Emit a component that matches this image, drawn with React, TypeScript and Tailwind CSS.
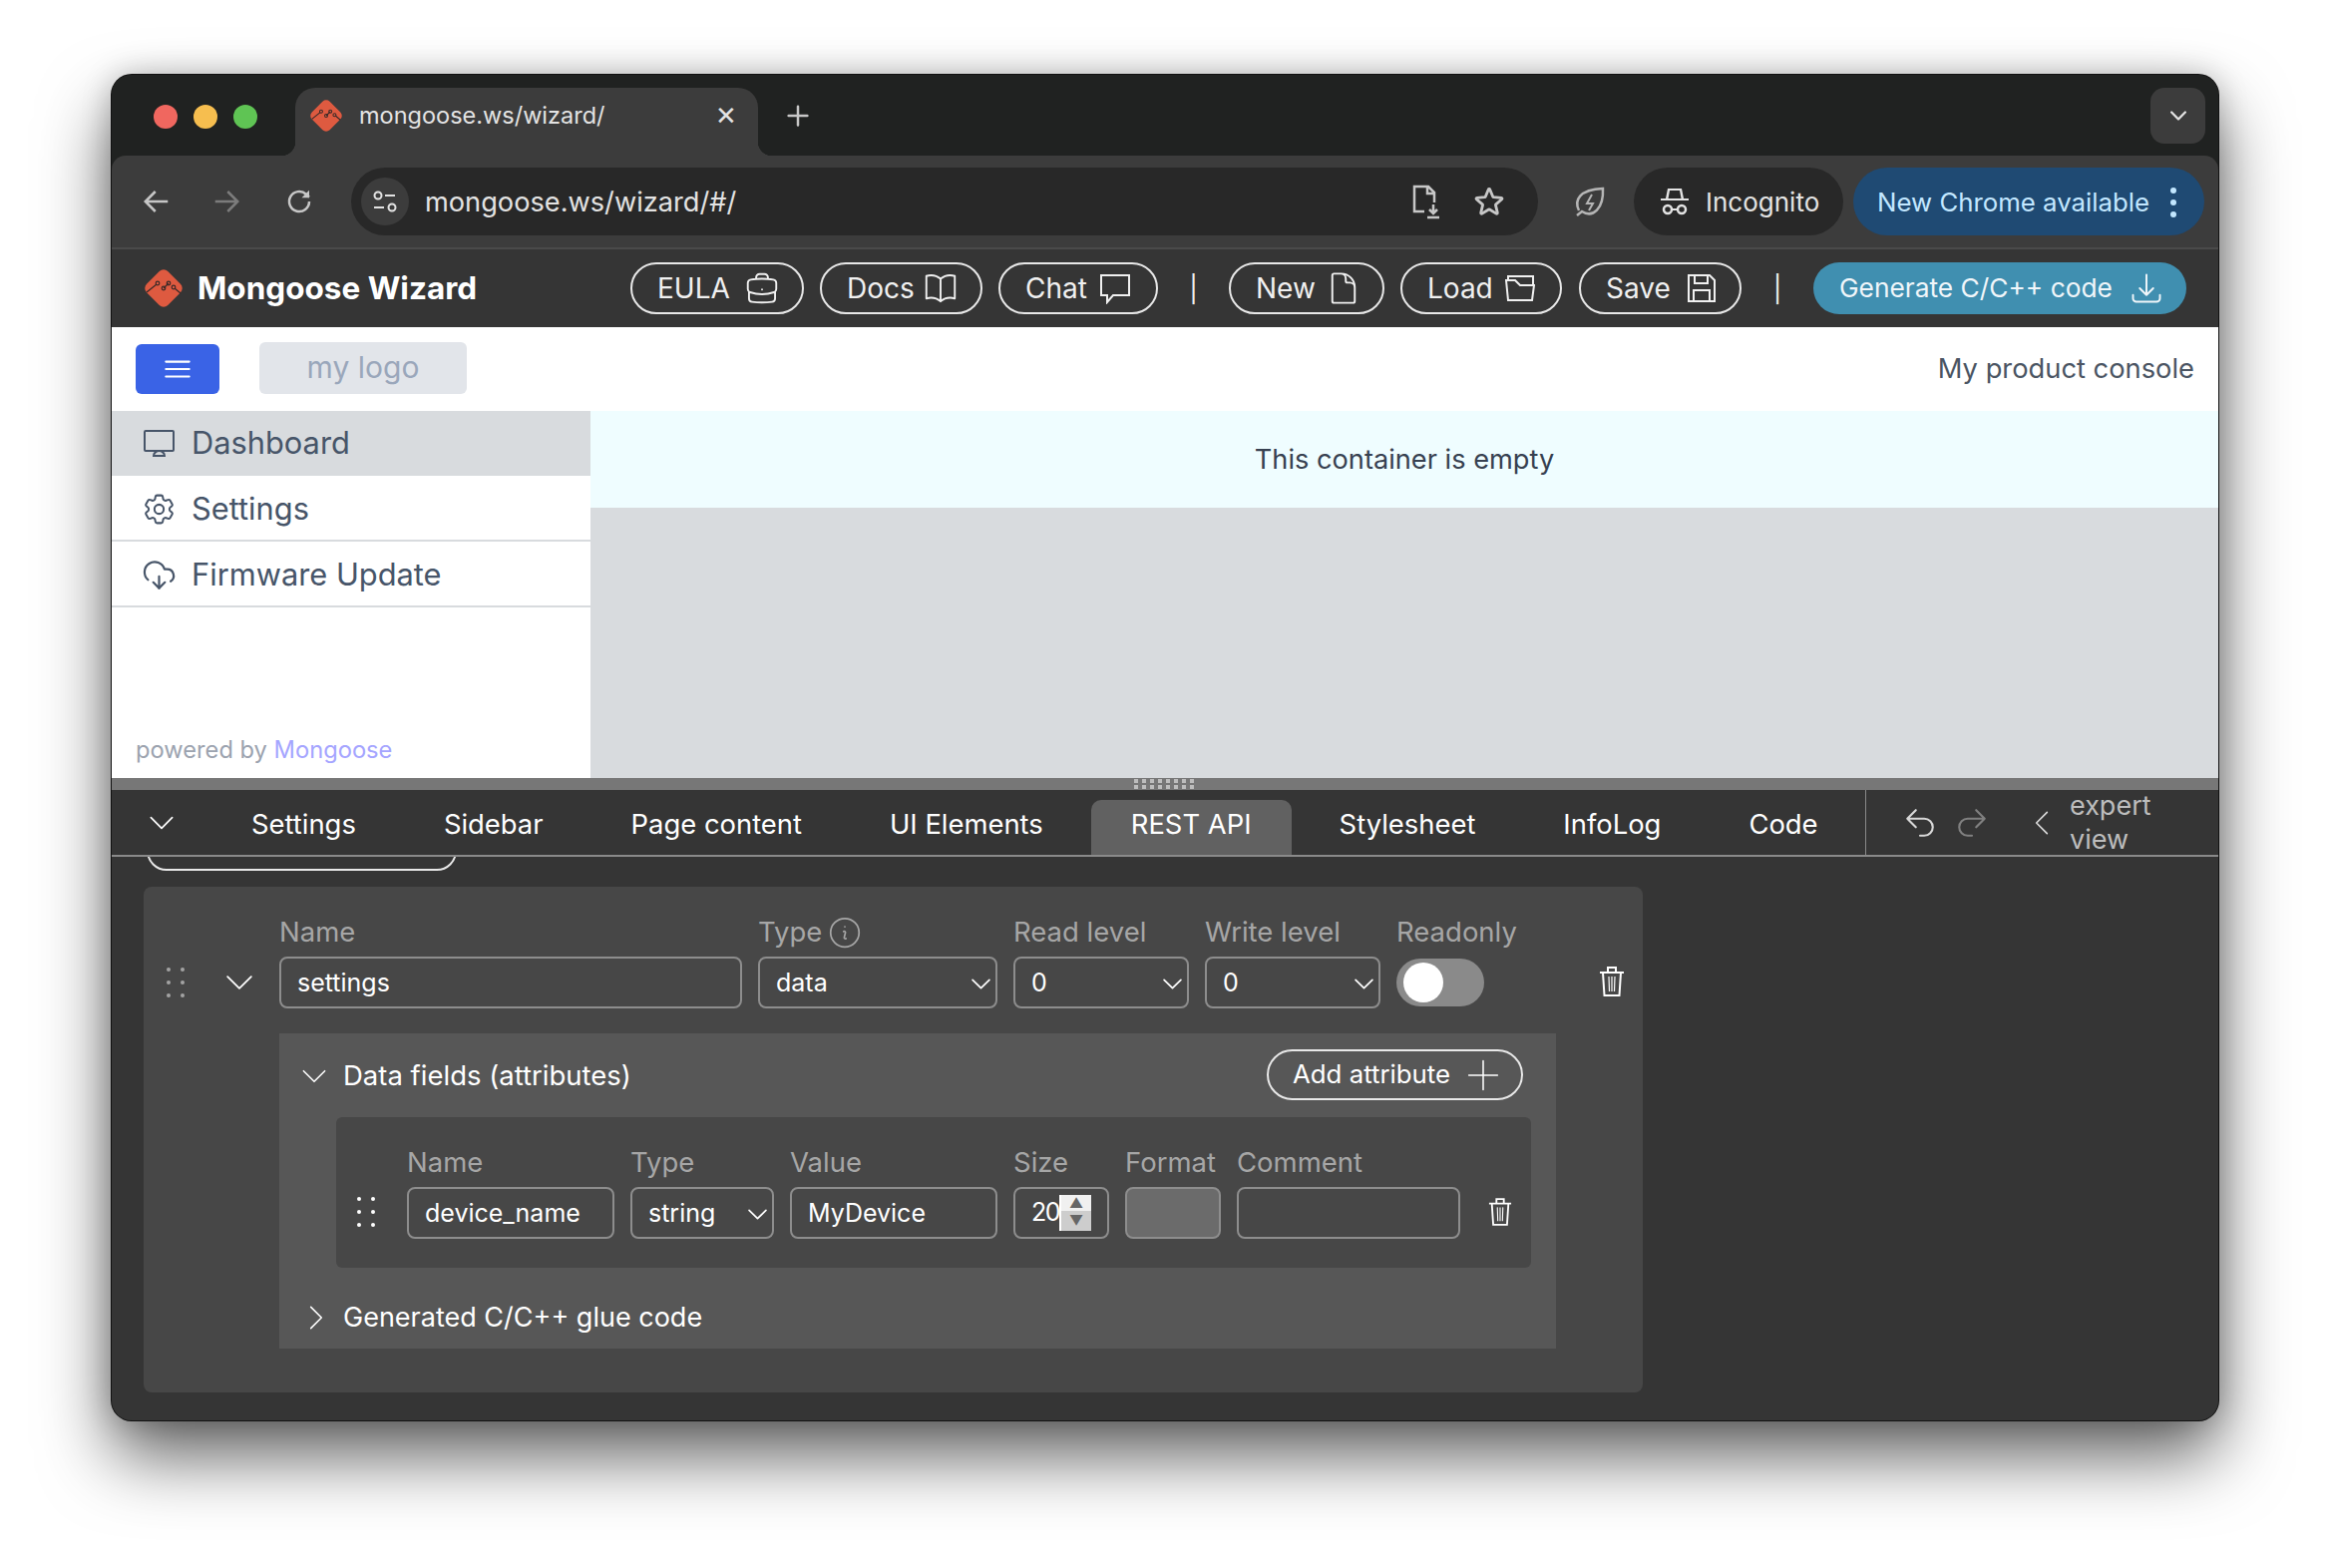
import type { ReactNode } from "react";
import { CloudDownload } from "lucide-react";
import {
  HiOutlineArrowDownTray,
  HiOutlineArrowUturnLeft,
  HiOutlineArrowUturnRight,
  HiOutlineBars3,
  HiOutlineBookOpen,
  HiOutlineBriefcase,
  HiOutlineChevronDown,
  HiOutlineChevronLeft,
  HiOutlineChevronRight,
  HiOutlineCog6Tooth,
  HiOutlineDocument,
  HiOutlineInformationCircle,
  HiOutlinePlus,
  HiOutlineStar,
} from "react-icons/hi2";

const MongooseLogo = ({ size }: { size: number }) => (
  <svg width={size} height={size} viewBox="0 0 38 38" className="shrink-0">
    <rect x="4" y="4" width="30" height="30" rx="6" transform="rotate(45 19 19)" fill="#de5a40" />
    <path d="M2 23 L12 15 M19 19 L24 14 M30 19 L36 24" stroke="#3a2a28" strokeWidth="1.300" fill="none" />
    <circle cx="13" cy="14" r="1.800" fill="none" stroke="#3a2a28" strokeWidth="1.200" />
    <circle cx="19" cy="19" r="1.800" fill="none" stroke="#3a2a28" strokeWidth="1.200" />
    <circle cx="24" cy="14" r="1.800" fill="none" stroke="#3a2a28" strokeWidth="1.200" />
    <circle cx="29" cy="18" r="1.800" fill="none" stroke="#3a2a28" strokeWidth="1.200" />
  </svg>
);

const SaveIcon = () => (
  <svg width="28" height="28" viewBox="0 0 28 28" fill="none" stroke="currentColor" strokeWidth="2" className="shrink-0 mr-[3px]">
    <path d="M1 1h21l5 5v21H1z" />
    <path d="M7 1v8h13V1M6 27V16h16v11" />
  </svg>
);

const ChatIcon = () => (
  <svg width="32" height="32" viewBox="0 0 32 32" fill="none" stroke="currentColor" strokeWidth="2" className="shrink-0 mr-[4px]">
    <path d="M2 3h28v20H14l-6 7v-7H2z" />
  </svg>
);

const FolderIcon = () => (
  <svg width="30" height="26" viewBox="0 0 30 26" fill="none" stroke="currentColor" strokeWidth="2" className="shrink-0 mr-[4px]">
    <path d="M3 5V1h25v9" />
    <path d="M1 5h9l5 5h14l-2 15H3z" />
  </svg>
);

const MonitorIcon = () => (
  <svg width="37" height="37" viewBox="0 0 37 37" fill="none" stroke="currentColor" strokeWidth="2" className="shrink-0">
    <rect x="4" y="6" width="29" height="20" rx="1" />
    <path d="M13 31c0-3 3-5 5.500-5s5.500 2 5.500 5z" />
  </svg>
);

const TrashIcon = ({ className }: { className: string }) => (
  <svg viewBox="0 0 26 30" fill="none" stroke="currentColor" strokeWidth="2" className={className}>
    <path d="M1 6h24M9 5V1h8v4M4 6l1.500 23h15L22 6" />
    <path d="M10 10l.5 15M13 10v15M16 10l-.5 15" strokeWidth="1.200" />
  </svg>
);

const DragDots = ({ dim }: { dim?: boolean }) => (
  <div className={`grid grid-cols-2 gap-x-[10px] gap-y-[9px] w-fit ${dim ? "opacity-50" : ""}`}>
    {[0, 1, 2, 3, 4, 5].map((i) => (
      <span key={i} className="w-[4px] h-[4px] rounded-full bg-white" />
    ))}
  </div>
);

const HeaderButton = ({ label, children }: { label: string; children: ReactNode }) => (
  <button className="w-full h-[52px] pl-[25px] pr-[21px] flex items-center justify-between rounded-full border-2 border-[#e8e8e8] text-[#f0f0f0] text-[28px] whitespace-nowrap">
    <span>{label}</span>
    {children}
  </button>
);

const Field = ({ label, width, children }: { label: ReactNode; width: string; children: ReactNode }) => (
  <div className={`flex flex-col ${width}`}>
    <div className="h-[40px] pb-[8px] flex items-center gap-[4px] text-[27.5px] text-[#a6a6a6] whitespace-nowrap">{label}</div>
    {children}
  </div>
);

const Input = ({ value }: { value: string }) => (
  <div className="h-[52px] pt-[2px] flex items-center px-[16px] rounded-[8px] border-2 border-[#8d8d8d] text-[25px] text-white whitespace-nowrap">
    {value}
  </div>
);

const Select = ({ value }: { value: string }) => (
  <div className="h-[52px] pt-[2px] flex items-center justify-between pl-[16px] pr-[1px] rounded-[8px] border-2 border-[#8d8d8d] text-[25px] text-white">
    <span>{value}</span>
    <HiOutlineChevronDown size={27} strokeWidth={1.500} />
  </div>
);

const SideItem = ({ label, active, icon }: { label: string; active?: boolean; icon: ReactNode }) => (
  <div
    className={`flex items-center gap-[14px] pl-[29px] text-[#475569] text-[30.800px] ${
      active ? "h-[65px] bg-[#d8dbde]" : "h-[66px] pt-[2px] border-b-2 border-[#d8dbde]"
    }`}
  >
    {icon}
    <span>{label}</span>
  </div>
);

const bottomTabs = ["Settings", "Sidebar", "Page content", "UI Elements", "REST API", "Stylesheet", "InfoLog", "Code"];

export default function App() {
  return (
    <div className="h-[1572px] overflow-hidden bg-white pt-[75px] pl-[112px] font-['Inter',sans-serif]">
      <div className="w-[2112px] h-[1349px] flex flex-col overflow-hidden rounded-[20px] bg-[#202221] shadow-[0_0_0_1px_#111,0_36px_70px_rgba(0,0,0,0.62),0_0_30px_rgba(0,0,0,0.22)]">
        {/* tab strip */}
        <div className="h-[81px] shrink-0 bg-[#202221] flex items-end pr-[13px]">
          <div className="w-[184px] h-[68px] flex items-center gap-[16px] pl-[42px] pb-[10px]">
            <span className="w-[24px] h-[24px] rounded-full bg-[#f0675f]" />
            <span className="w-[24px] h-[24px] rounded-full bg-[#f6be4f]" />
            <span className="w-[24px] h-[24px] rounded-full bg-[#5fc454]" />
          </div>
          <div className="relative w-[464px] h-[68px] bg-[#3c3c3c] rounded-t-[20px] flex items-center pl-[15px] pr-[21px] pb-[12px] text-[#e3e3e3] text-[23.500px]">
            <span className="absolute -left-[14px] bottom-0 w-[14px] h-[14px] bg-[radial-gradient(circle_at_0_0,#202221_14px,#3c3c3c_14.500px)]" />
            <span className="absolute -right-[14px] bottom-0 w-[14px] h-[14px] bg-[radial-gradient(circle_at_100%_0,#202221_14px,#3c3c3c_14.500px)]" />
            <MongooseLogo size={32} />
            <span className="ml-[17px] whitespace-nowrap">mongoose.ws/wizard/</span>
            <span className="ml-auto text-[#e3e3e3] text-[26px] leading-none">✕</span>
          </div>
          <div className="ml-[25px] h-[68px] pb-[12px] flex items-center text-[#c7c7c7]">
            <HiOutlinePlus size={30} strokeWidth={2} />
          </div>
          <div className="ml-auto mb-[12px] w-[55px] h-[56px] rounded-[14px] bg-[#3c3c3c] flex items-center justify-center text-[#e3e3e3]">
            <HiOutlineChevronDown size={22} strokeWidth={2.500} />
          </div>
        </div>

        {/* browser toolbar */}
        <div className="h-[94px] shrink-0 bg-[#3c3c3c] rounded-t-[14px] border-b-2 border-[#4a4a4a] flex items-center pl-[30px] pr-[14px]">
          <BackArrow />
          <div className="w-[40px]" />
          <ForwardArrow />
          <div className="w-[43px]" />
          <svg width="30" height="30" viewBox="0 0 24 24" fill="none" stroke="#c7c7c7" strokeWidth="2" className="shrink-0">
            <path d="M20 12a8 8 0 1 1-2.500-5.800L20 8.500" />
            <path d="M20 3v6h-6" fill="#c7c7c7" stroke="none" />
          </svg>
          <div className="ml-[37px] w-[1190px] h-[68px] rounded-full bg-[#282828] flex items-center pl-[10px] pr-[32px]">
            <div className="w-[48px] h-[48px] rounded-full bg-[#3c3c3c] flex items-center justify-center">
              <svg width="26" height="26" viewBox="0 0 26 26" fill="none" stroke="#e3e3e3" strokeWidth="2">
                <circle cx="6" cy="7" r="3.500" />
                <path d="M13 7h10M2 19h10" />
                <circle cx="20" cy="19" r="3.500" />
              </svg>
            </div>
            <span className="ml-[16px] pt-[2px] text-[27.200px] text-[#e3e3e3] whitespace-nowrap">mongoose.ws/wizard/#/</span>
            <svg width="32" height="36" viewBox="0 0 32 36" fill="none" stroke="#c7c7c7" strokeWidth="2.500" className="ml-auto">
              <path d="M14 28H4V3h14l6 6v10M17 3v7h7" />
              <path d="M23 21v9M19 26l4 4 4-4" />
              <path d="M17 34h12" />
            </svg>
            <HiOutlineStar size={34} color="#c7c7c7" strokeWidth={2} className="ml-[30px]" />
          </div>
          <svg width="34" height="34" viewBox="0 0 34 34" fill="none" stroke="#b5b5b5" strokeWidth="2.500" className="ml-[35px] shrink-0">
            <path d="M6 26C1 16 6 5 30 4c1 20-10 30-21 23L4 31" />
            <path d="M19 10l-5 9h6l-4 7" strokeWidth="2" />
          </svg>
          <div className="ml-[27px] w-[210px] h-[68px] rounded-full bg-[#282828] flex items-center pl-[26px] gap-[16px] text-[#e3e3e3] text-[26px]">
            <svg width="30" height="30" viewBox="0 0 30 30" fill="#e3e3e3" className="shrink-0">
              <path d="M8 2h14l2 10h5v2H1v-2h5zM10 4l-1.500 8h13L20 4z" />
              <circle cx="8" cy="23" r="4" fill="none" stroke="#e3e3e3" strokeWidth="2.500" />
              <circle cx="22" cy="23" r="4" fill="none" stroke="#e3e3e3" strokeWidth="2.500" />
              <path d="M12 22h6v2h-6z" />
            </svg>
            <span>Incognito</span>
          </div>
          <div className="ml-[10px] flex-1 h-[68px] pt-[2px] rounded-full bg-[#1f4a73] flex items-center pl-[24px] pr-[28px] justify-between text-[#c2e7ff] text-[25.800px] whitespace-nowrap">
            <span>New Chrome available</span>
            <span className="flex flex-col gap-[6px]">
              <span className="w-[6px] h-[6px] rounded-full bg-[#c2e7ff]" />
              <span className="w-[6px] h-[6px] rounded-full bg-[#c2e7ff]" />
              <span className="w-[6px] h-[6px] rounded-full bg-[#c2e7ff]" />
            </span>
          </div>
        </div>

        {/* wizard header */}
        <div className="h-[78px] shrink-0 bg-[#353535] flex items-center pl-[33px]">
          <MongooseLogo size={38} />
          <span className="ml-[15px] w-[434px] text-[31.500px] font-bold text-white whitespace-nowrap">Mongoose Wizard</span>
          <div className="flex items-center">
            <div className="w-[174px]"><HeaderButton label="EULA"><HiOutlineBriefcase size={38} strokeWidth={1.200} /></HeaderButton></div>
            <div className="w-[163px] ml-[16px]"><HeaderButton label="Docs"><HiOutlineBookOpen size={38} strokeWidth={1.200} /></HeaderButton></div>
            <div className="w-[160px] ml-[16px]"><HeaderButton label="Chat"><ChatIcon /></HeaderButton></div>
            <span className="w-[71px] text-center text-[#f0f0f0] text-[26px]">|</span>
            <div className="w-[156px]"><HeaderButton label="New"><HiOutlineDocument size={36} strokeWidth={1.300} /></HeaderButton></div>
            <div className="w-[162px] ml-[16px]"><HeaderButton label="Load"><FolderIcon /></HeaderButton></div>
            <div className="w-[163px] ml-[17px]"><HeaderButton label="Save"><SaveIcon /></HeaderButton></div>
            <span className="w-[72px] text-center text-[#f0f0f0] text-[26px]">|</span>
            <button className="w-[374px] h-[52px] rounded-full bg-[#408fb0] flex items-center justify-between pl-[26px] pr-[22px] text-[#f0f6fa] text-[26.300px] whitespace-nowrap">
              <span>Generate C/C++ code</span>
              <HiOutlineArrowDownTray size={36} strokeWidth={1.300} />
            </button>
          </div>
        </div>

        {/* preview */}
        <div className="h-[84px] shrink-0 bg-white flex items-center pl-[24px] pr-[24px]">
          <button className="w-[84px] h-[50px] rounded-[6px] bg-[#3a63e6] flex items-center justify-center text-white">
            <HiOutlineBars3 size={34} />
          </button>
          <div className="ml-[40px] w-[208px] h-[52px] -mt-[2px] pb-[2px] rounded-[6px] bg-[#e2e5ea] text-[#9aa7bb] text-[30px] flex items-center justify-center">
            my logo
          </div>
          <span className="ml-auto pt-[1px] text-[27.300px] text-[#4b5563]">My product console</span>
        </div>
        <div className="h-[368px] shrink-0 flex">
          <div className="w-[480px] bg-white flex flex-col">
            <SideItem label="Dashboard" active icon={<MonitorIcon />} />
            <SideItem label="Settings" icon={<HiOutlineCog6Tooth size={37} strokeWidth={1.300} />} />
            <SideItem label="Firmware Update" icon={<span className="w-[37px] flex justify-center"><CloudDownload size={35} strokeWidth={1.500} /></span>} />
            <div className="mt-auto pl-[24px] pb-[10px] text-[23.700px] text-[#9ca3af]">
              powered by <span className="text-[#a5a5ff]">Mongoose</span>
            </div>
          </div>
          <div className="flex-1 bg-[#d8dbde]">
            <div className="h-[97px] pt-[2px] bg-[#effdff] flex items-center justify-center text-[27.200px] text-[#374151]">
              This container is empty
            </div>
          </div>
        </div>

        {/* splitter */}
        <div className="h-[12px] shrink-0 bg-[#777777] flex flex-col items-center justify-center gap-[2px]">
          <div className="w-[62px] h-[4px] bg-[repeating-linear-gradient(90deg,#bdbdbd_0,#bdbdbd_4px,transparent_4px,transparent_8px)]" />
          <div className="w-[62px] h-[4px] bg-[repeating-linear-gradient(90deg,#bdbdbd_0,#bdbdbd_4px,transparent_4px,transparent_8px)]" />
        </div>

        {/* editor tabs */}
        <div className="h-[67px] shrink-0 bg-[#353535] border-b-2 border-[#8a8a8a] flex items-end">
          <div className="w-[100px] h-[65px] flex items-center justify-center text-white">
            <HiOutlineChevronDown size={34} strokeWidth={1.200} />
          </div>
          <div className="w-[1658px] flex items-end gap-[8px]">
            {bottomTabs.map((t) => (
              <div
                key={t}
                className={`h-[55px] px-[40px] pb-[6px] flex items-center rounded-t-[10px] text-[27.400px] text-white whitespace-nowrap ${
                  t === "REST API" ? "bg-[#616161]" : ""
                }`}
              >
                {t}
              </div>
            ))}
          </div>
          <div className="h-[65px] flex-1 border-l border-[#8a8a8a] flex items-center pl-[37px] text-[#d8d8d8]">
            <HiOutlineArrowUturnLeft size={34} />
            <HiOutlineArrowUturnRight size={34} className="ml-[18px] text-[#808080]" />
            <HiOutlineChevronLeft size={34} strokeWidth={1.200} className="ml-[36px]" />
            <div className="ml-[11px] text-[27px] leading-[34px] text-[#bdbdbd] w-[90px]">expert view</div>
          </div>
        </div>

        {/* editor body */}
        <div className="flex-1 overflow-hidden bg-[#353535] pl-[32px]">
          <div className="w-[311px] h-[52px] -mt-[38px] ml-[3px] rounded-[20px] border-2 border-[#e8e8e8]" />
          <div className="mt-[16px] w-[1503px] h-[507px] rounded-[8px] bg-[#474747] pt-[30px] flex">
            <div className="w-[136px] pt-[40px] h-[92px] flex items-center shrink-0">
              <div className="w-[77px] pl-[23px]"><DragDots dim /></div>
              <HiOutlineChevronDown size={38} strokeWidth={1.100} className="text-white" />
            </div>
            <div className="flex-1">
              <div className="flex gap-[16px]">
                <Field label="Name" width="w-[464px]"><Input value="settings" /></Field>
                <Field
                  label={<>Type <HiOutlineInformationCircle size={38} strokeWidth={1.100} /></>}
                  width="w-[240px]"
                >
                  <Select value="data" />
                </Field>
                <Field label="Read level" width="w-[176px]"><Select value="0" /></Field>
                <Field label="Write level" width="w-[176px]"><Select value="0" /></Field>
                <Field label="Readonly" width="w-[88px]">
                  <div className="h-[48px] mt-[2px] rounded-full bg-[#8a8a8a] flex items-center pl-[7px]">
                    <span className="w-[40px] h-[40px] rounded-full bg-white" />
                  </div>
                </Field>
                <div className="pl-[99px] pt-[50px] text-white"><TrashIcon className="w-[26px] h-[30px]" /></div>
              </div>

              <div className="mt-[25px] w-[1280px] h-[316px] bg-[#575757]">
                <div className="h-[84px] pt-[1px] flex items-center pl-[18px] pr-[33px] text-white text-[27.500px] whitespace-nowrap">
                  <HiOutlineChevronDown size={34} strokeWidth={1.100} />
                  <span className="ml-[12px]">Data fields (attributes)</span>
                  <button className="ml-auto w-[257px] h-[51px] -mt-[2px] rounded-full border-2 border-[#e8e8e8] flex items-center justify-between pl-[24px] pr-[15px] text-[25.800px]">
                    <span>Add attribute</span>
                    <HiOutlinePlus size={46} strokeWidth={0.800} />
                  </button>
                </div>
                <div className="ml-[57px] w-[1198px] h-[151px] rounded-[6px] bg-[#474747] pt-[30px] pl-[21px] flex">
                  <div className="w-[50px] pt-[50px]"><DragDots /></div>
                  <div className="flex gap-[16px]">
                    <Field label="Name" width="w-[208px]"><Input value="device_name" /></Field>
                    <Field label="Type" width="w-[144px]"><Select value="string" /></Field>
                    <Field label="Value" width="w-[208px]"><Input value="MyDevice" /></Field>
                    <Field label="Size" width="w-[96px]">
                      <div className="h-[52px] flex items-center pl-[16px] rounded-[8px] border-2 border-[#8d8d8d] text-[25px] text-white">
                        <span className="w-[28px] tracking-[-1.500px] whitespace-nowrap">20</span>
                        <div className="w-[32px] h-[36px] border-l-2 border-white flex flex-col text-[#666666] text-[14px] leading-none">
                          <span className="h-[16px] bg-[#f0f0f0] flex items-center justify-center">▲</span>
                          <span className="h-[20px] bg-[#cdcdcd] flex items-center justify-center">▼</span>
                        </div>
                      </div>
                    </Field>
                    <Field label="Format" width="w-[96px]">
                      <div className="h-[52px] rounded-[8px] border-2 border-[#8d8d8d] bg-[#6b6b6b]" />
                    </Field>
                    <Field label="Comment" width="w-[224px]">
                      <div className="h-[52px] rounded-[8px] border-2 border-[#8d8d8d]" />
                    </Field>
                    <div className="ml-[12px] pt-[50px] text-white"><TrashIcon className="w-[24px] h-[30px]" /></div>
                  </div>
                </div>
                <div className="mt-[29px] h-[42px] flex items-center pl-[20px] text-white text-[27px]">
                  <HiOutlineChevronRight size={34} strokeWidth={1.100} />
                  <span className="ml-[10px]">Generated C/C++ glue code</span>
                </div>
              </div>
            </div>
          </div>
        </div>
      </div>
    </div>
  );
}

function BackArrow() {
  return (
    <svg width="30" height="30" viewBox="0 0 24 24" fill="none" stroke="#c7c7c7" strokeWidth="2" className="shrink-0">
      <path d="M21 12H4M11 4l-8 8 8 8" />
    </svg>
  );
}

function ForwardArrow() {
  return (
    <svg width="30" height="30" viewBox="0 0 24 24" fill="none" stroke="#7c7c7c" strokeWidth="2" className="shrink-0">
      <path d="M3 12h17M13 4l8 8-8 8" />
    </svg>
  );
}
